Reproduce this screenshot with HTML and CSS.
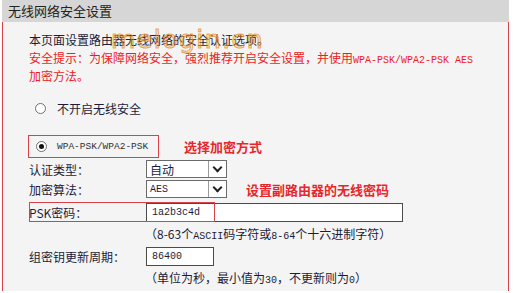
FILE: index.html
```html
<!DOCTYPE html>
<html lang="zh-CN">
<head>
    <meta charset="UTF-8">
    <meta name="viewport" content="width=device-width, initial-scale=1.0">
    <title>无线网络安全设置</title>
    <link rel="stylesheet" href="styles.css">
</head>
<body>
    <div class="panel">
        <div class="panel-title">无线网络安全设置</div>
        <div class="panel-body">
            <span class="watermark">melogin.cn</span>
            <p class="line">本页面设置路由器无线网络的安全认证选项。</p>
            <p class="line warn">安全提示：为保障网络安全，强烈推荐开启安全设置，并使用<span class="mono">WPA-PSK/WPA2-PSK AES</span></p>
            <p class="line warn">加密方法。</p>

            <div class="radio-row first">
                <span class="radio"></span>
                <span>不开启无线安全</span>
            </div>

            <div class="radio-line">
                <div class="radio-row boxed">
                    <span class="radio checked"></span>
                    <span class="mono small">WPA-PSK/WPA2-PSK</span>
                </div>
                <span class="note">选择加密方式</span>
            </div>

            <div class="field">
                <label>认证类型：</label>
                <div class="select"><span>自动</span><i class="arrow"></i></div>
            </div>
            <div class="field">
                <label>加密算法：</label>
                <div class="select"><span class="mono">AES</span><i class="arrow"></i></div>
                <span class="note note-psk">设置副路由器的无线密码</span>
            </div>
            <div class="field psk">
                <label>PSK密码：</label>
                <div class="input wide"><span class="mono">1a2b3c4d</span></div>
                <span class="mark"></span>
            </div>
            <p class="hint">（8-63个<span class="mono">ASCII</span>码字符或<span class="mono">8-64</span>个十六进制字符）</p>
            <div class="field">
                <label>组密钥更新周期：</label>
                <div class="input short"><span class="mono">86400</span></div>
            </div>
            <p class="hint">（单位为秒，最小值为<span class="mono">30</span>，不更新则为<span class="mono">0</span>）</p>
        </div>
    </div>
</body>
</html>
```

FILE: styles.css
```css
* {margin: 0; padding: 0; box-sizing: border-box;}
body {background: #ffffff; color: #1c1c3a; font-family: "Noto Sans CJK SC", "Noto Sans", sans-serif; font-size: 12px;}

.panel {width: 507px; margin-left: 2px;}
.panel-title {height: 22px; line-height: 22px; padding-left: 6px; background: #d6d6d6; color: #222; font-size: 13px;}
.panel-body {position: relative; height: 269px; padding: 9px 0 0 26px; background: #f4f4f4; border-left: 1px solid #d8414a; border-right: 1px solid #d8414a;}

.line {line-height: 18px; height: 18px; white-space: nowrap;}
.warn {color: #ee1c25;}
.mono {font-family: "Liberation Mono", "DejaVu Sans Mono", monospace; font-size: 10px;}
.mono.small {font-size: 9.5px; color: #333;}

.watermark {position: absolute; left: 108px; top: 3px; font-family: "DejaVu Sans", sans-serif; font-size: 25px; letter-spacing: 1.5px; color: rgba(240, 170, 60, 0.2); -webkit-text-stroke: 1px rgba(225, 140, 30, 0.75);}

.radio-row {display: flex; align-items: center; gap: 10px; height: 18px; padding-left: 6px;}
.radio-row.first {margin-top: 14px; gap: 11px;}
.radio {width: 11px; height: 11px; border: 1px solid #6f6f6f; border-radius: 50%; background: #fff; position: relative;}
.radio.checked::after {content: ""; position: absolute; left: 2px; top: 2px; width: 5px; height: 5px; border-radius: 50%; background: #111;}

.radio-line {display: flex; align-items: center; gap: 25px; margin-top: 18px;}
.radio-row.boxed {height: 23px; width: 131px; margin-left: -1px; padding-left: 7px; gap: 10px; border: 1px solid #d8414a;}

.note {color: #e8262c; font-weight: 700; font-size: 13px; white-space: nowrap;}

.field {position: relative; display: flex; align-items: center; height: 20px; margin-top: 0;}
.radio-line + .field {margin-top: 1px;}
.field label {width: 117px; flex-shrink: 0;}

.select {display: flex; align-items: center; justify-content: space-between; width: 81px; height: 18px; background: #fff; border: 1px solid #6b6b6b; padding-left: 3px;}
.arrow {display: flex; align-items: center; justify-content: center; width: 18px; height: 100%; border-left: 1px solid #9a9a9a; font-style: normal;}
.arrow::before {content: ""; width: 5px; height: 5px; border-right: 2px solid #222; border-bottom: 2px solid #222; transform: translateY(-2px) rotate(45deg);}

.note-psk {position: absolute; left: 217px; top: 1px;}

.field.psk {margin-top: 3px;}
.input {height: 19px; display: flex; align-items: center; padding-left: 5px; background: #fff; border: 1px solid #4a4a4a;}
.input.wide {width: 257px;}
.input.short {width: 68px;}
.mark {position: absolute; left: 0; top: 0; width: 186px; height: 20px; border: 1px solid #d8414a; pointer-events: none;}

.hint {margin: 3px 0 0 116px; height: 18px; line-height: 18px; white-space: nowrap; overflow: visible;}
.field + .hint + .field {margin-top: 3px;}
```
